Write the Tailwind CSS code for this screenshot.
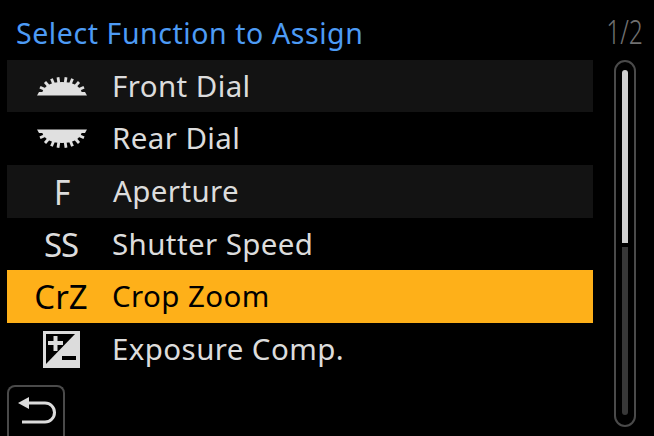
<!DOCTYPE html>
<html lang="en">
<head>
    <meta charset="UTF-8">
    <title>Select Function to Assign</title>
    <script src="https://cdn.jsdelivr.net/npm/@tailwindcss/browser@4"></script>
</head>
<body class="bg-black">
    <div class="w-[654px] h-[436px] overflow-hidden bg-black flex font-['Noto_Sans',sans-serif] text-[#dcdcdc] text-[29.5px] tracking-[0.4px]">
        <!-- left column -->
        <div class="w-[593px] pl-[7px] flex flex-col">
            <div class="h-[60px] pl-[9px] pt-[6px] flex items-center text-[#4d9bf5] text-[28.5px] tracking-[0.57px]">Select Function to Assign</div>
            <div class="h-[52px] bg-[#131313] flex items-center">
                <div class="w-[105px] flex justify-center pl-[4px]">
                    <svg width="50" height="19" viewBox="0 0 50 19" fill="#e0e0e0">
                        <path d="M0 18.500L2 15H48L50 18.500Z"/>
                        <path d="M5 16C7 8 16 5 25 5C34 5 43 8 45 16Z"/>
                        <g stroke="#e0e0e0" stroke-width="2.800">
                            <line x1="21.800" y1="6" x2="21" y2="0.200"/>
                            <line x1="28.200" y1="6" x2="29" y2="0.200"/>
                            <line x1="16.700" y1="7" x2="14.500" y2="1.700"/>
                            <line x1="33.300" y1="7" x2="35.500" y2="1.700"/>
                            <line x1="11.500" y1="9" x2="8" y2="5"/>
                            <line x1="38.500" y1="9" x2="42" y2="5"/>
                            <line x1="7.600" y1="12.200" x2="3" y2="10.200"/>
                            <line x1="42.400" y1="12.200" x2="47" y2="10.200"/>
                        </g>
                    </svg>
                </div>
                <span>Front Dial</span>
            </div>
            <div class="h-[53px] flex items-center">
                <div class="w-[105px] flex justify-center pl-[4px]">
                    <svg width="50" height="19" viewBox="0 0 50 19" fill="#e0e0e0">
                        <g transform="translate(0,19) scale(1,-1)">
                            <path d="M0 18.500L2 15H48L50 18.500Z"/>
                            <path d="M5 16C7 8 16 5 25 5C34 5 43 8 45 16Z"/>
                            <g stroke="#e0e0e0" stroke-width="2.800">
                                <line x1="21.800" y1="6" x2="21" y2="0.200"/>
                                <line x1="28.200" y1="6" x2="29" y2="0.200"/>
                                <line x1="16.700" y1="7" x2="14.500" y2="1.700"/>
                                <line x1="33.300" y1="7" x2="35.500" y2="1.700"/>
                                <line x1="11.500" y1="9" x2="8" y2="5"/>
                                <line x1="38.500" y1="9" x2="42" y2="5"/>
                                <line x1="7.600" y1="12.200" x2="3" y2="10.200"/>
                                <line x1="42.400" y1="12.200" x2="47" y2="10.200"/>
                            </g>
                        </g>
                    </svg>
                </div>
                <span>Rear Dial</span>
            </div>
            <div class="h-[53px] bg-[#131313] flex items-center">
                <div class="w-[106px] text-center pl-[5px] text-[35px] leading-none scale-x-90">F</div>
                <span>Aperture</span>
            </div>
            <div class="h-[52px] flex items-center">
                <div class="w-[105px] text-center pl-[3px] text-[33px] leading-none tracking-[-1px]">SS</div>
                <span>Shutter Speed</span>
            </div>
            <div class="h-[53px] bg-[#feb019] text-black flex items-center">
                <div class="w-[105px] text-center pl-[3px] text-[33px] leading-none tracking-normal">CrZ</div>
                <span>Crop Zoom</span>
            </div>
            <div class="h-[53px] flex items-center">
                <div class="w-[105px] flex justify-center pl-[4px]">
                    <svg width="37" height="37" viewBox="0 0 37 37">
                        <rect width="37" height="37" fill="#dcdcdc"/>
                        <path d="M3 3H32L3 33Z" fill="#000"/>
                        <path d="M5 12H20M12.500 5V20" stroke="#dcdcdc" stroke-width="4"/>
                        <path d="M19 27H33" stroke="#000" stroke-width="4"/>
                    </svg>
                </div>
                <span>Exposure Comp.</span>
            </div>
            <div class="mt-auto w-[58px] h-[51px] border-2 border-b-0 border-[#4a4a4a] rounded-t-lg flex justify-center pt-[10px] pl-[1px]">
                <svg width="40" height="28" viewBox="0 0 40 28" fill="none">
                    <path d="M1 6L12 0V12Z" fill="#dcdcdc"/>
                    <path d="M10 6H28A9.500 9.500 0 0 1 28 25H5" stroke="#dcdcdc" stroke-width="3"/>
                </svg>
            </div>
        </div>
        <!-- page number and scrollbar -->
        <div class="flex-1 flex flex-col items-center pl-[3px]">
            <div class="h-[60px] pt-[4px] text-[#707070] text-[33px] font-light tracking-normal flex items-center scale-x-75">1/2</div>
            <div class="w-[22px] h-[367px] border-2 border-[#4a4a4a] rounded-full flex flex-col items-center pt-[8px] pb-[10px] gap-[4px]">
                <div class="w-[6px] h-[173px] bg-[#d0d0d0] rounded-t-full"></div>
                <div class="w-[6px] flex-1 bg-[#383838] rounded-b-full"></div>
            </div>
        </div>
    </div>
</body>
</html>
